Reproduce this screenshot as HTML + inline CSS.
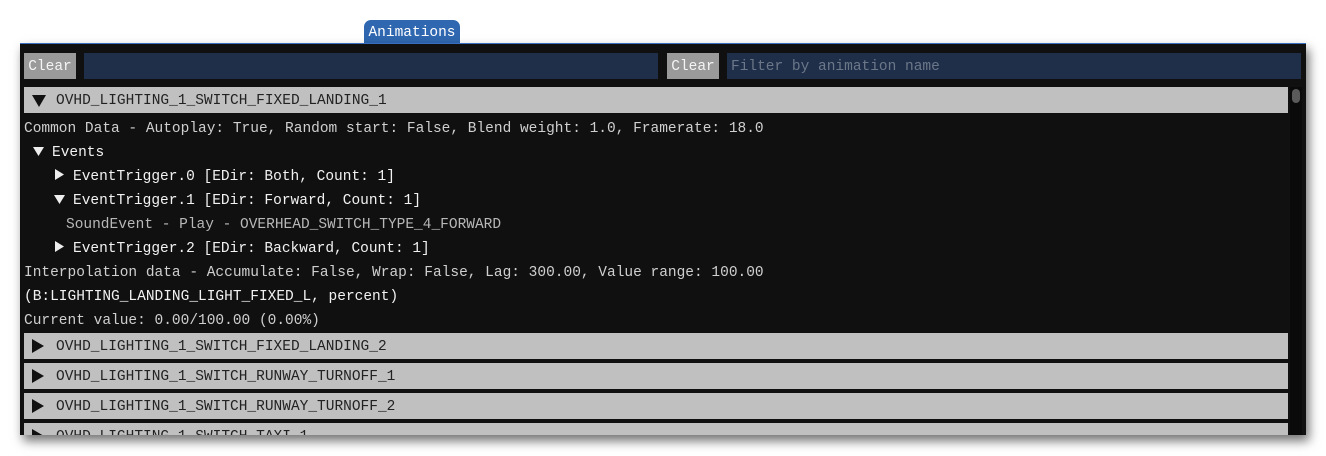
<!DOCTYPE html>
<html><head><meta charset="utf-8"><style>
*{margin:0;padding:0;box-sizing:border-box}
body{width:1326px;height:456px;background:#fff;position:relative;overflow:hidden;font-family:"Liberation Mono","DejaVu Sans Mono",monospace;font-size:14.5px}
.abs{position:absolute;white-space:pre}
#tab{left:364px;top:20px;width:96px;height:24px;background:#2f67b0;border-radius:7px 7px 0 0;color:#fff;text-align:center;line-height:27px}
#win{left:20px;top:43px;width:1286px;height:392px;background:#101010;border-top:1px solid #3a6fc0;box-shadow:3px 6px 10px rgba(0,0,0,.55);overflow:hidden}
.btn{background:#9a9a9a;color:#f4f4f4;height:26px;line-height:28px;text-align:center}
.inp{background:#1f2f4a;height:26px;line-height:28px;color:#6c7788;padding-left:4px}
.hdr{left:4px;width:1264px;height:26px;background:#c0c0c0;color:#222;line-height:28px}
.hdr .t{position:absolute;left:32px}
.tx{color:#cfcfcf;line-height:26px;height:24px}
.w{color:#f2f2f2}
</style></head><body>
<div class="abs" id="tab">Animations</div>
<div class="abs" id="win">
 <div class="abs btn" style="left:4px;top:9px;width:52px">Clear</div>
 <div class="abs inp" style="left:64px;top:9px;width:574px"></div>
 <div class="abs btn" style="left:647px;top:9px;width:52px">Clear</div>
 <div class="abs inp" style="left:707px;top:9px;width:574px">Filter by animation name</div>
 <div class="abs" style="left:1270px;top:43px;width:12px;height:349px;background:#0a0a0a"></div>
 <div class="abs" style="left:1272px;top:45px;width:8px;height:14px;border-radius:4px;background:#5a5a5a"></div>

 <div class="abs hdr" style="top:43px"><svg class="abs" style="left:8px;top:8px" width="14" height="12"><path d="M0 0H14L7 12Z" fill="#111"/></svg><span class="t">OVHD_LIGHTING_1_SWITCH_FIXED_LANDING_1</span></div>
 <div class="abs tx" style="left:4px;top:72px">Common Data - Autoplay: True, Random start: False, Blend weight: 1.0, Framerate: 18.0</div>
 <svg class="abs" style="left:13px;top:103px" width="11" height="9"><path d="M0 0H11L5.5 9Z" fill="#eee"/></svg>
 <div class="abs tx w" style="left:32px;top:96px">Events</div>
 <svg class="abs" style="left:35px;top:125px" width="9" height="11"><path d="M0 0V11L9 5.5Z" fill="#eee"/></svg>
 <div class="abs tx w" style="left:53px;top:120px">EventTrigger.0 [EDir: Both, Count: 1]</div>
 <svg class="abs" style="left:34px;top:151px" width="11" height="9"><path d="M0 0H11L5.5 9Z" fill="#eee"/></svg>
 <div class="abs tx w" style="left:53px;top:144px">EventTrigger.1 [EDir: Forward, Count: 1]</div>
 <div class="abs tx" style="left:46px;top:168px;color:#b8b8b8">SoundEvent - Play - OVERHEAD_SWITCH_TYPE_4_FORWARD</div>
 <svg class="abs" style="left:35px;top:197px" width="9" height="11"><path d="M0 0V11L9 5.5Z" fill="#eee"/></svg>
 <div class="abs tx w" style="left:53px;top:192px">EventTrigger.2 [EDir: Backward, Count: 1]</div>
 <div class="abs tx" style="left:4px;top:216px">Interpolation data - Accumulate: False, Wrap: False, Lag: 300.00, Value range: 100.00</div>
 <div class="abs tx w" style="left:4px;top:240px">(B:LIGHTING_LANDING_LIGHT_FIXED_L, percent)</div>
 <div class="abs tx" style="left:4px;top:264px">Current value: 0.00/100.00 (0.00%)</div>

 <div class="abs hdr" style="top:289px"><svg class="abs" style="left:8px;top:6px" width="12" height="14"><path d="M0 0V14L12 7Z" fill="#111"/></svg><span class="t">OVHD_LIGHTING_1_SWITCH_FIXED_LANDING_2</span></div>
 <div class="abs hdr" style="top:319px"><svg class="abs" style="left:8px;top:6px" width="12" height="14"><path d="M0 0V14L12 7Z" fill="#111"/></svg><span class="t">OVHD_LIGHTING_1_SWITCH_RUNWAY_TURNOFF_1</span></div>
 <div class="abs hdr" style="top:349px"><svg class="abs" style="left:8px;top:6px" width="12" height="14"><path d="M0 0V14L12 7Z" fill="#111"/></svg><span class="t">OVHD_LIGHTING_1_SWITCH_RUNWAY_TURNOFF_2</span></div>
 <div class="abs hdr" style="top:379px"><svg class="abs" style="left:8px;top:6px" width="12" height="14"><path d="M0 0V14L12 7Z" fill="#111"/></svg><span class="t">OVHD_LIGHTING_1_SWITCH_TAXI_1</span></div>
</div>
</body></html>
